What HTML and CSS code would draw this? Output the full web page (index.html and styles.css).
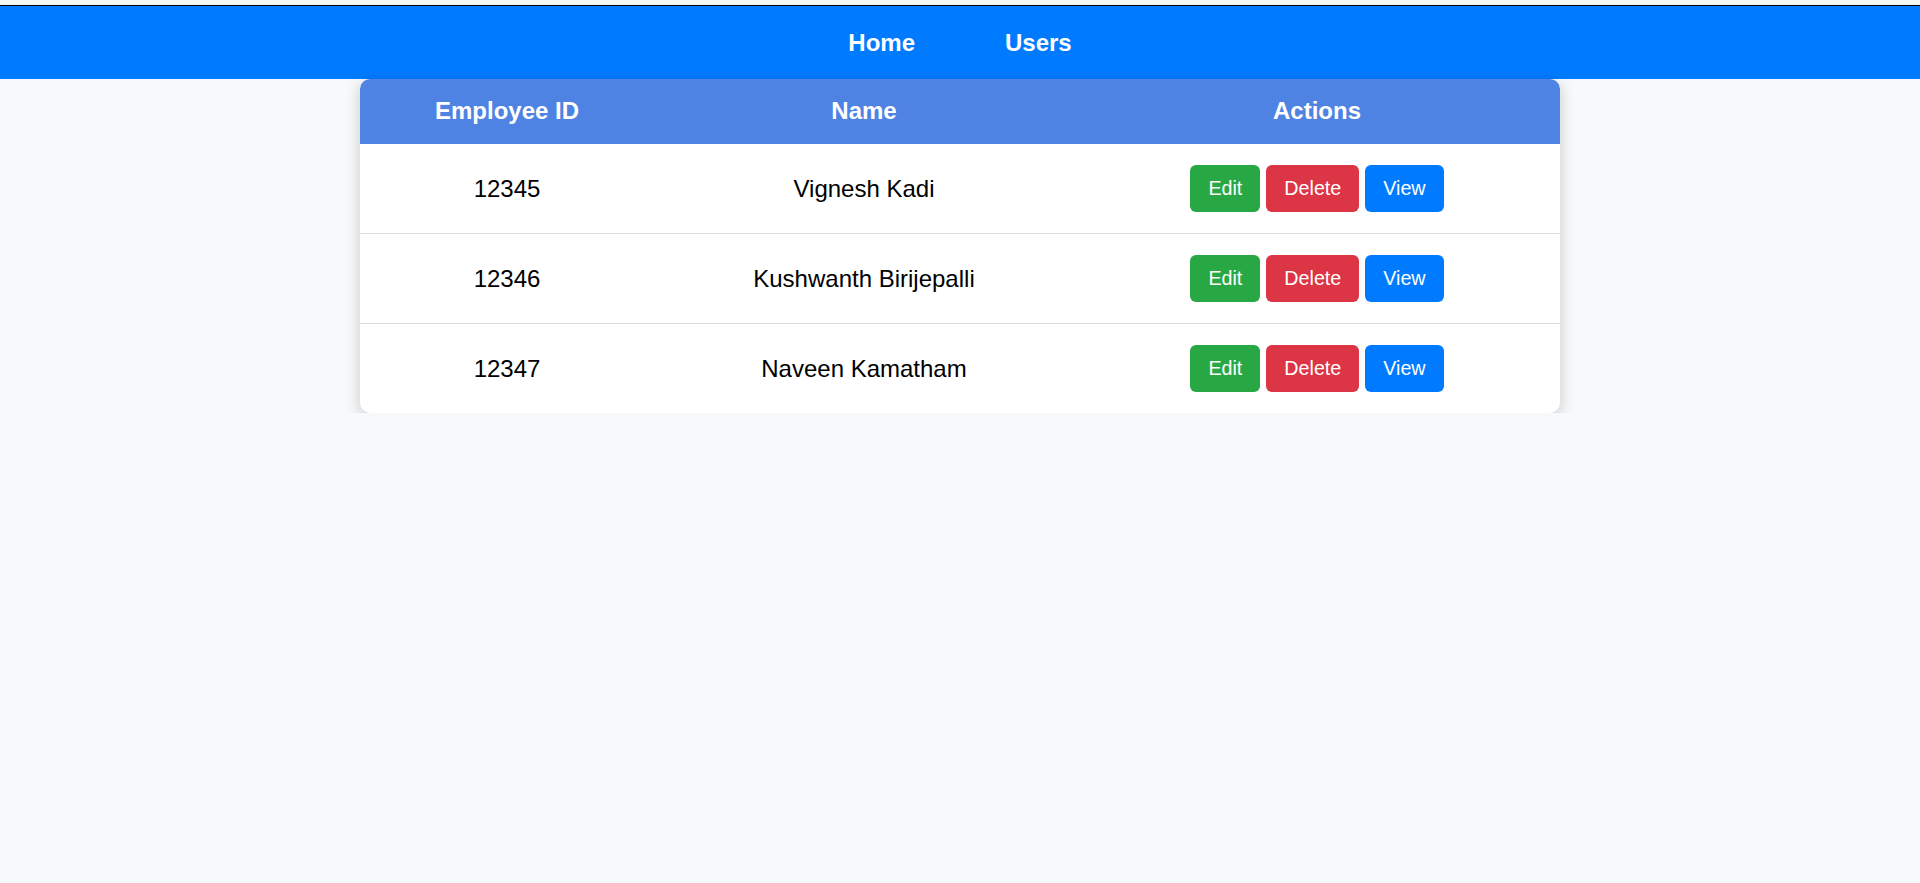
FILE: index.html
```html
<!DOCTYPE html>
<html lang="en">
<head>
<meta charset="utf-8">
<title>Employees</title>
<link rel="stylesheet" href="styles.css">
</head>
<body>
<div class="top-strip"></div>
<nav class="navbar">
  <a class="nav-link" href="#">Home</a>
  <a class="nav-link" href="#">Users</a>
</nav>
<main class="content">
  <table class="emp-table">
    <colgroup>
      <col class="col-id">
      <col class="col-name">
      <col class="col-actions">
    </colgroup>
    <thead>
      <tr>
        <th>Employee ID</th>
        <th>Name</th>
        <th>Actions</th>
      </tr>
    </thead>
    <tbody>
      <tr>
        <td>12345</td>
        <td>Vignesh Kadi</td>
        <td><div class="actions"><button class="btn btn-edit">Edit</button><button class="btn btn-delete">Delete</button><button class="btn btn-view">View</button></div></td>
      </tr>
      <tr>
        <td>12346</td>
        <td>Kushwanth Birijepalli</td>
        <td><div class="actions"><button class="btn btn-edit">Edit</button><button class="btn btn-delete">Delete</button><button class="btn btn-view">View</button></div></td>
      </tr>
      <tr>
        <td>12347</td>
        <td>Naveen Kamatham</td>
        <td><div class="actions"><button class="btn btn-edit">Edit</button><button class="btn btn-delete">Delete</button><button class="btn btn-view">View</button></div></td>
      </tr>
    </tbody>
  </table>
</main>
</body>
</html>
```
FILE: styles.css
```css
* { box-sizing: border-box; }
html, body {
  margin: 0;
  padding: 0;
  background: #f8f9fa;
  font-family: "Liberation Sans", Arial, sans-serif;
  color: #000;
}
.top-strip {
  height: 5px;
  background: #f2f8f5;
}
.navbar {
  height: 74px;
  background: #007bff;
  border-top: 1px solid #000;
  display: flex;
  justify-content: center;
  align-items: center;
  gap: 90px;
}
.nav-link {
  color: #fff;
  font-weight: bold;
  font-size: 24px;
  text-decoration: none;
}
.content {
  display: flex;
  justify-content: center;
}
.emp-table {
  width: 1200px;
  border-collapse: separate;
  border-spacing: 0;
  background: #fff;
  border-radius: 10px;
  overflow: hidden;
  box-shadow: 0 4px 16px rgba(0, 0, 0, 0.2);
  table-layout: fixed;
}
.col-id { width: 294px; }
.col-name { width: 420px; }
.col-actions { width: 486px; }
.emp-table th {
  background: #4f83e3;
  color: #fff;
  font-size: 24px;
  font-weight: bold;
  line-height: 28px;
  padding: 18px 0 19px;
  text-align: center;
}
.emp-table td {
  font-size: 24px;
  text-align: center;
  padding: 21px 0;
  border-bottom: 1px solid #ddd;
  height: 90px;
}
.emp-table tbody tr:last-child td {
  border-bottom: none;
  height: 89px;
}
.actions {
  display: flex;
  justify-content: center;
  gap: 6px;
}
.btn {
  font-family: "Liberation Sans", Arial, sans-serif;
  font-size: 19.7px;
  line-height: 23px;
  padding: 12px 18px;
  border: none;
  border-radius: 6px;
  color: #fff;
}
.btn-edit { background: #28a745; }
.btn-delete { background: #dc3545; }
.btn-view { background: #007bff; }
```
